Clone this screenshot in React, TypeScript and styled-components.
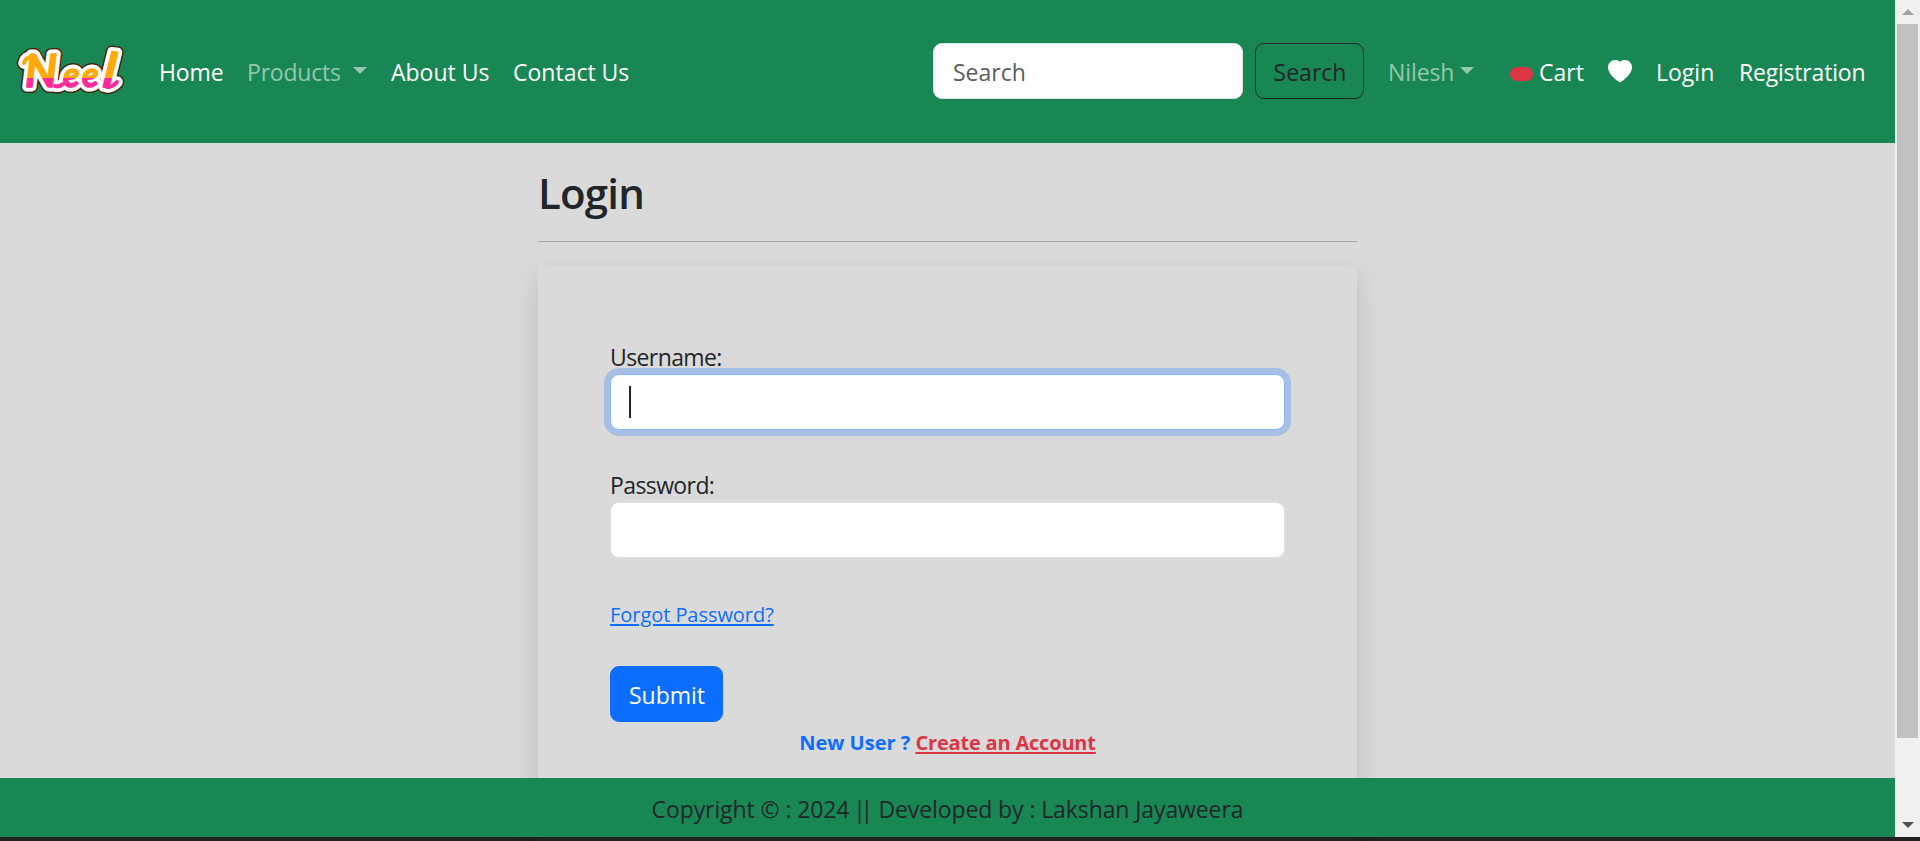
import React from 'react';
import styled, { createGlobalStyle } from 'styled-components';

const Global = createGlobalStyle`
  *, *::before, *::after { box-sizing: border-box; }
  body {
    margin: 0;
    overflow: hidden;
    background: #dadada;
    color: #212529;
    font: 400 23px/36px "Open Sans", "Noto Sans", sans-serif;
  }
`;

const Screen = styled.div`
  display: flex;
  flex-direction: column;
  height: 841px;
  overflow: hidden;
  background: #212121;
`;

const Viewport = styled.div`
  display: flex;
  height: 837px;
`;

const Page = styled.div`
  display: flex;
  flex-direction: column;
  width: 1895px;
  background: #dadada;
`;

const Navbar = styled.nav`
  display: flex;
  align-items: flex-start;
  flex: none;
  height: 143px;
  padding: 43px 30px 0 18px;
  background: #198754;
`;

const Brand = styled.a`
  width: 141px;
  height: 56px;
`;

const NavList = styled.div<{ $start?: number }>`
  display: flex;
  margin-left: ${p => p.$start ?? 0}px;
  padding-top: 11px;
`;

const NavItem = styled.a<{ $width: number; $muted?: boolean; $spacing?: number }>`
  display: flex;
  align-items: center;
  width: ${p => p.$width}px;
  height: 36px;
  color: ${p => (p.$muted ? 'rgba(255, 255, 255, 0.55)' : '#fff')};
  letter-spacing: ${p => p.$spacing ?? 0}px;
  white-space: nowrap;
`;

const Caret = styled.span<{ $gap: number }>`
  margin: 0 0 3px ${p => p.$gap}px;
  border: 7px solid transparent;
  border-top-color: currentColor;
  border-bottom: 0;
`;

const Badge = styled.span`
  width: 23px;
  height: 14px;
  margin: 4px 6px 0 -1px;
  border-radius: 7px;
  background: #dc3545;
`;

const SearchInput = styled.input`
  width: 310px;
  height: 56px;
  margin: 0 12px 0 auto;
  padding: 2px 18px 0 19px;
  border: 1px solid #dee2e6;
  border-radius: 9px;
  background: #fff;
  font: inherit;
  outline: none;
  &::placeholder { color: #595c5f; opacity: 1; }
`;

const Button = styled.button<{ $primary?: boolean }>`
  width: ${p => (p.$primary ? 113 : 109)}px;
  height: 56px;
  padding: 2px 0 0 1px;
  border: 1px solid ${p => (p.$primary ? '#0d6efd' : '#212529')};
  border-radius: 9px;
  background: ${p => (p.$primary ? '#0d6efd' : 'transparent')};
  color: ${p => (p.$primary ? '#fff' : '#212529')};
  font: inherit;
`;

const Main = styled.main`
  flex: 1;
  min-height: 0;
  width: 819px;
  margin: 0 auto;
`;

const Title = styled.h3`
  height: 99px;
  margin: 0;
  padding-top: 25px;
  border-bottom: 1px solid #a9aaab;
  font-size: 42px;
  font-weight: 600;
  line-height: 50px;
  letter-spacing: -0.8px;
`;

const Card = styled.section`
  height: 620px;
  margin-top: 24px;
  padding: 73px 72px 0;
  box-shadow: 0 12px 24px rgba(0, 0, 0, 0.15);
`;

const Field = styled.label`
  display: block;
  height: 128px;
  letter-spacing: -0.6px;
`;

const FieldInput = styled.input`
  display: block;
  width: 675px;
  height: 56px;
  margin-top: -1px;
  padding: 0 18px;
  border: 1px solid #dee2e6;
  border-radius: 9px;
  background: #fff;
  font: inherit;
  outline: none;
`;

const FocusedInput = styled.div`
  display: flex;
  align-items: center;
  width: 675px;
  height: 56px;
  margin-top: -1px;
  padding-left: 18px;
  border: 1px solid #86b7fe;
  border-radius: 9px;
  background: #fff;
  box-shadow: 0 0 0 6px rgba(13, 110, 253, 0.25);
`;

const TextCursor = styled.span`
  width: 2px;
  height: 32px;
  background: #212529;
`;

const SmallLink = styled.a<{ $danger?: boolean }>`
  color: ${p => (p.$danger ? '#dc3545' : '#0d6efd')};
  font-size: 20px;
  letter-spacing: ${p => (p.$danger ? -0.19 : -0.05)}px;
  text-decoration: underline;
  text-decoration-thickness: 2px;
  text-underline-offset: 2px;
`;

const Forgot = styled.div`
  height: 71px;
`;

const Signup = styled.div`
  color: #0d6efd;
  font-size: 20px;
  font-weight: 700;
  line-height: 42px;
  text-align: center;
`;

const Footer = styled.footer`
  flex: none;
  height: 59px;
  padding-top: 13px;
  background: #198754;
  letter-spacing: -0.1px;
  text-align: center;
`;

const Pipes = styled.span`
  margin: 0 5px 0 -2px;
  letter-spacing: -5.5px;
`;

const Scrollbar = styled.div`
  display: flex;
  flex-direction: column;
  align-items: center;
  width: 25px;
  padding-top: 9px;
  background: #f0f0f0;
`;

const Thumb = styled.div`
  width: 21px;
  height: 714px;
  margin: 9px 0 84px;
  background: #c1c1c1;
`;

const Arrow = styled.span<{ $down?: boolean }>`
  border: 6px solid transparent;
  border-top: ${p => (p.$down ? '6px solid #505050' : '0')};
  border-bottom: ${p => (p.$down ? '0' : '6px solid #a3a3a3')};
`;

const LogoSvg = styled.svg`
  display: block;
  overflow: visible;
`;

const LogoText = styled.text`
  font-family: Lato, "Open Sans", sans-serif;
  font-style: italic;
  font-weight: 700;
`;

const logoLayers = [
  { stroke: '#40270f', width: 12 },
  { stroke: '#fff', width: 9 },
  { stroke: 'url(#neel)', width: 1.4 },
];

function Logo() {
  return (
    <LogoSvg width="106" height="54" viewBox="0 0 106 54">
      <defs>
        <linearGradient id="neel" gradientUnits="userSpaceOnUse" x1="0" y1="0" x2="0" y2="54">
          <stop offset="0.648" stopColor="#ffa90a" />
          <stop offset="0.648" stopColor="#ff2a98" />
        </linearGradient>
      </defs>
      {logoLayers.map(layer => (
        <g key={layer.stroke} stroke={layer.stroke} strokeLinejoin="round" strokeLinecap="round">
          <LogoText y="44" fill={layer.stroke} strokeWidth={layer.width}>
            <tspan x="7" fontSize="45">N</tspan>
            <tspan x="45" fontSize="34">e</tspan>
            <tspan x="64" fontSize="34">e</tspan>
            <tspan x="84" fontSize="49" rotate="7">l</tspan>
          </LogoText>
          {/* swashes: lead-in stroke and closing tail */}
          <g fill="none" strokeWidth={layer.width + 2.6}>
            <path d="M6 20Q8 13 17 14" />
            <path d="M37 43Q42 44 45 41" />
            <path d="M89 44Q95 44 99 39" />
          </g>
        </g>
      ))}
    </LogoSvg>
  );
}

function Heart() {
  return (
    <svg width="24" height="24" viewBox="0 0 16 16" fill="#fff">
      <path fillRule="evenodd" d="M8 1.314C12.438-3.248 23.534 4.735 8 15-7.534 4.736 3.562-3.248 8 1.314" />
    </svg>
  );
}

export default function App() {
  return (
    <Screen>
      <Global />
      <Viewport>
        <Page>
          <Navbar>
            <Brand><Logo /></Brand>
            <NavList>
              <NavItem $width={88} $spacing={-0.1}>Home</NavItem>
              <NavItem $width={144} $muted $spacing={-0.2}>Products<Caret $gap={12} /></NavItem>
              <NavItem $width={122}>About Us</NavItem>
              <NavItem $width={118}>Contact Us</NavItem>
            </NavList>
            <SearchInput placeholder="Search" />
            <Button>Search</Button>
            <NavList $start={24}>
              <NavItem $width={123} $muted $spacing={-0.1}>Nilesh<Caret $gap={6} /></NavItem>
              <NavItem $width={97}><Badge />Cart</NavItem>
              <NavItem $width={48}><Heart /></NavItem>
              <NavItem $width={83}>Login</NavItem>
              <NavItem $width={126} $spacing={-0.2}>Registration</NavItem>
            </NavList>
          </Navbar>
          <Main>
            <Title>Login</Title>
            <Card>
              <Field>Username:<FocusedInput><TextCursor /></FocusedInput></Field>
              <Field>Password:<FieldInput type="password" /></Field>
              <Forgot><SmallLink>Forgot Password?</SmallLink></Forgot>
              <Button $primary>Submit</Button>
              <Signup>New User ? <SmallLink $danger>Create an Account</SmallLink></Signup>
            </Card>
          </Main>
          <Footer>Copyright © : 2024 <Pipes>||</Pipes> Developed by : Lakshan Jayaweera</Footer>
        </Page>
        <Scrollbar>
          <Arrow />
          <Thumb />
          <Arrow $down />
        </Scrollbar>
      </Viewport>
    </Screen>
  );
}
